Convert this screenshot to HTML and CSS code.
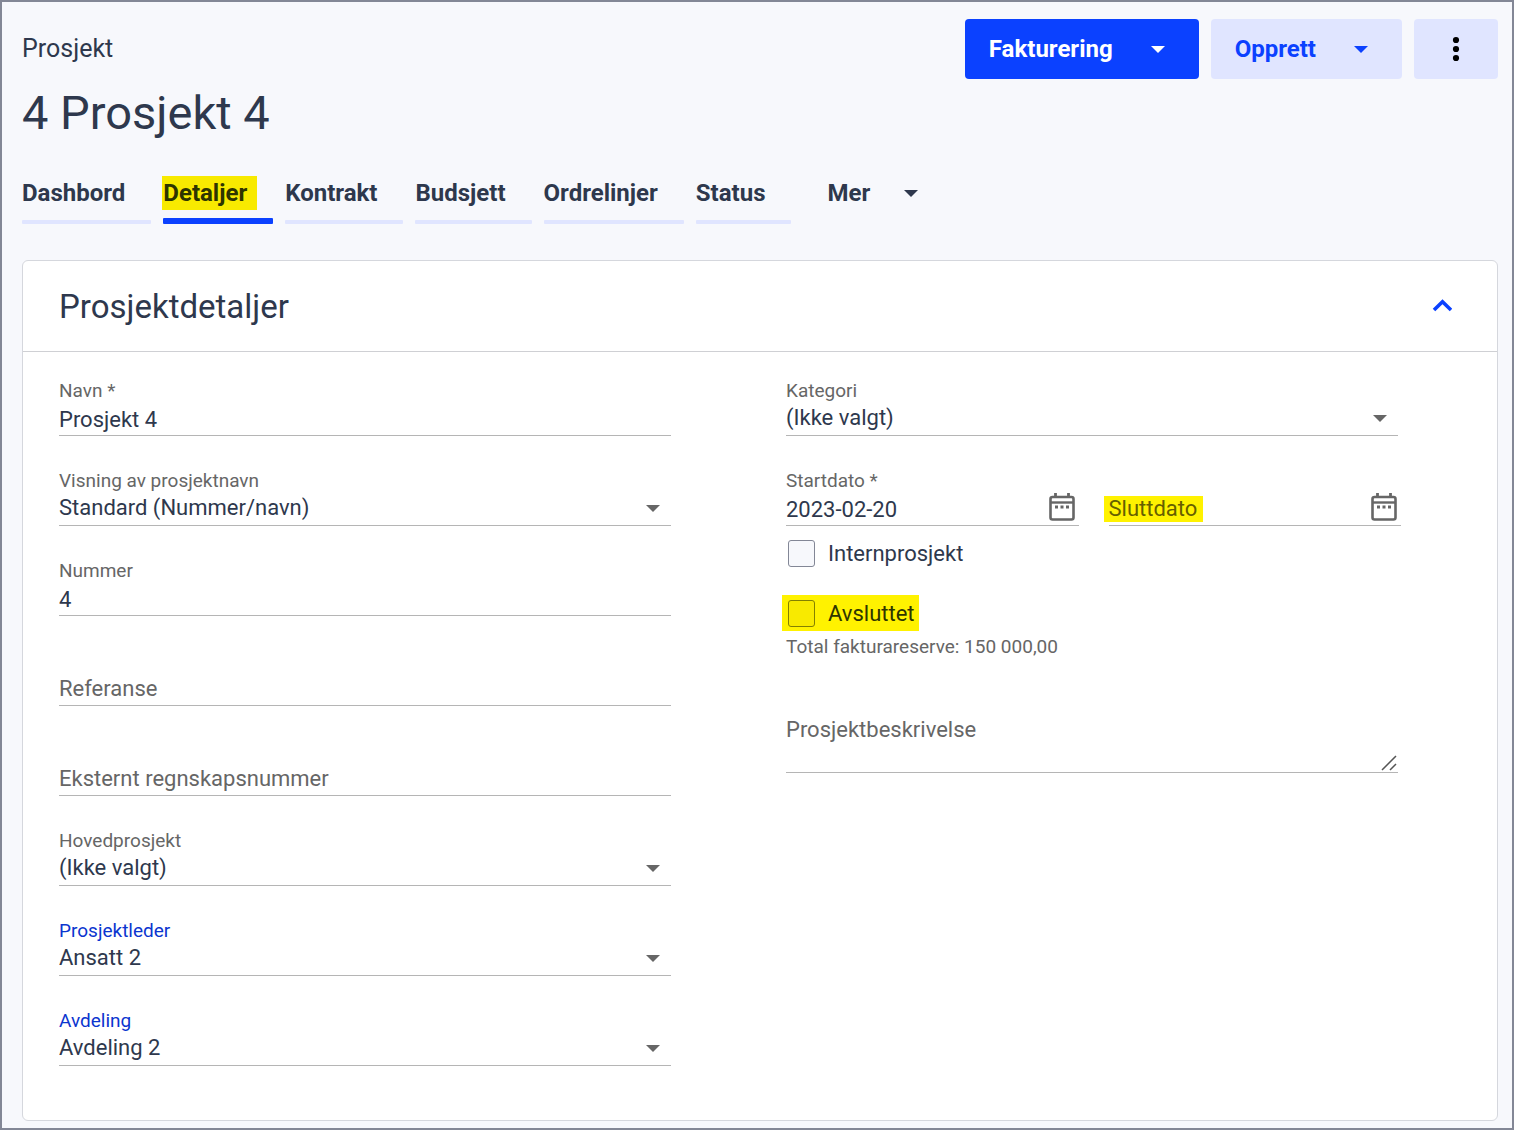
FILE: index.html
```html
<!DOCTYPE html>
<html lang="no">
<head>
    <meta charset="UTF-8">
    <meta name="viewport" content="width=device-width, initial-scale=1.0">
    <title>4 Prosjekt 4</title>
    <link rel="stylesheet" href="styles.css">
</head>
<body>
    <header class="page-header">
        <div>
            <p class="page-type">Prosjekt</p>
            <h1>4 Prosjekt 4</h1>
        </div>
        <div class="actions">
            <button type="button" class="btn btn-primary">Fakturering <span class="caret"></span></button>
            <button type="button" class="btn">Opprett <span class="caret"></span></button>
            <button type="button" class="btn btn-more" aria-label="Flere valg">
                <svg width="8" height="26" viewBox="0 0 8 26">
                    <circle cx="4" cy="4" r="3.1"/>
                    <circle cx="4" cy="13" r="3.1"/>
                    <circle cx="4" cy="22" r="3.1"/>
                </svg>
            </button>
        </div>
    </header>

    <nav class="tabs">
        <a href="#" class="tab">Dashbord</a>
        <a href="#" class="tab active"><mark>Detaljer</mark></a>
        <a href="#" class="tab">Kontrakt</a>
        <a href="#" class="tab">Budsjett</a>
        <a href="#" class="tab">Ordrelinjer</a>
        <a href="#" class="tab">Status</a>
        <button type="button" class="tab-more">Mer <span class="caret"></span></button>
    </nav>

    <main class="card">
        <div class="card-header">
            <h2>Prosjektdetaljer</h2>
            <button type="button" class="collapse" aria-label="Skjul">
                <svg width="20" height="14" viewBox="0 0 20 14">
                    <path d="M2 11L10.500 2.800L19 11" fill="none" stroke="#0b41ff" stroke-width="3.6"/>
                </svg>
            </button>
        </div>

        <form class="card-body">
            <div class="column">
                <div class="field">
                    <label for="navn">Navn *</label>
                    <div class="control"><input type="text" id="navn" value="Prosjekt 4" required></div>
                </div>
                <div class="field">
                    <label for="visning">Visning av prosjektnavn</label>
                    <div class="control select">
                        <select id="visning"><option>Standard (Nummer/navn)</option></select>
                    </div>
                </div>
                <div class="field">
                    <label for="nummer">Nummer</label>
                    <div class="control"><input type="text" id="nummer" value="4"></div>
                </div>
                <div class="field empty">
                    <div class="control"><label for="referanse">Referanse</label><input type="text" id="referanse"></div>
                </div>
                <div class="field empty">
                    <div class="control"><label for="regnskap">Eksternt regnskapsnummer</label><input type="text" id="regnskap"></div>
                </div>
                <div class="field">
                    <label for="hovedprosjekt">Hovedprosjekt</label>
                    <div class="control select">
                        <select id="hovedprosjekt"><option>(Ikke valgt)</option></select>
                    </div>
                </div>
                <div class="field linked">
                    <label for="leder">Prosjektleder</label>
                    <div class="control select">
                        <select id="leder"><option>Ansatt 2</option></select>
                    </div>
                </div>
                <div class="field linked">
                    <label for="avdeling">Avdeling</label>
                    <div class="control select">
                        <select id="avdeling"><option>Avdeling 2</option></select>
                    </div>
                </div>
            </div>

            <div class="column">
                <div class="field">
                    <label for="kategori">Kategori</label>
                    <div class="control select">
                        <select id="kategori"><option>(Ikke valgt)</option></select>
                    </div>
                </div>
                <div>
                    <div class="dates">
                        <div class="field">
                            <label for="start">Startdato *</label>
                            <div class="control">
                                <input type="text" id="start" value="2023-02-20" required>
                                <button type="button" class="calendar" aria-label="Velg startdato">
                                    <svg width="26" height="30" viewBox="0 0 26 30">
                                        <rect x="1.5" y="4" width="23" height="22.5" rx="2" fill="none" stroke="#666" stroke-width="2.6"/>
                                        <path d="M1.5 9.500h23" stroke="#666" stroke-width="2.4"/>
                                        <path d="M6.5 0v4M19.5 0v4" stroke="#666" stroke-width="2.8"/>
                                        <path d="M6 14h3M11.5 14h3M17 14h3" stroke="#666" stroke-width="2.8"/>
                                    </svg>
                                </button>
                            </div>
                        </div>
                        <div class="field empty">
                            <div class="control">
                                <label for="slutt"><mark>Sluttdato</mark></label>
                                <input type="text" id="slutt">
                                <button type="button" class="calendar" aria-label="Velg sluttdato">
                                    <svg width="26" height="30" viewBox="0 0 26 30">
                                        <rect x="1.5" y="4" width="23" height="22.5" rx="2" fill="none" stroke="#666" stroke-width="2.6"/>
                                        <path d="M1.5 9.500h23" stroke="#666" stroke-width="2.4"/>
                                        <path d="M6.5 0v4M19.5 0v4" stroke="#666" stroke-width="2.8"/>
                                        <path d="M6 14h3M11.5 14h3M17 14h3" stroke="#666" stroke-width="2.8"/>
                                    </svg>
                                </button>
                            </div>
                        </div>
                    </div>
                    <div class="checks">
                        <label class="check"><input type="checkbox" name="intern">Internprosjekt</label>
                        <label class="check marked"><input type="checkbox" name="avsluttet">Avsluttet</label>
                    </div>
                    <p class="reserve">Total fakturareserve: 150 000,00</p>
                    <div class="description">
                        <label for="beskrivelse">Prosjektbeskrivelse</label>
                        <textarea id="beskrivelse"></textarea>
                        <svg class="grip" width="16" height="16" viewBox="0 0 16 16">
                            <path d="M1 15L15 1M9 15L15 9" stroke="#555" stroke-width="1.5"/>
                        </svg>
                    </div>
                </div>
            </div>
        </form>
    </main>
</body>
</html>
```

FILE: styles.css
```css
* {
    box-sizing: border-box;
}
body {
    font-family: Roboto, "Open Sans", sans-serif;
    font-size: 22px;
    color: #2e384d;
    background-color: #f7f8fc;
    margin: 0;
    min-height: 100vh;
    padding: 17px 14px 7px 20px;
    border: 2px solid #838796;
}
h1, h2, p {
    margin: 0;
    font-weight: 400;
}
button, input, select, textarea {
    font: inherit;
    color: inherit;
    margin: 0;
    padding: 0;
    border: none;
    outline: none;
    background: none;
}
button {
    cursor: pointer;
}
mark {
    background-color: #fff200;
    color: #665f00;
}
.page-header {
    display: flex;
    justify-content: space-between;
    align-items: flex-start;
}
.page-type {
    font-size: 25px;
    line-height: 60px;
}
h1 {
    font-size: 47px;
    line-height: 68px;
}
.actions {
    display: flex;
    gap: 12px;
}
.btn {
    display: flex;
    align-items: center;
    gap: 38px;
    height: 60px;
    padding: 0 34px 0 24px;
    border-radius: 4px;
    background-color: #e0e5ff;
    color: #0b41ff;
    font-size: 24px;
    font-weight: 700;
}
.btn-primary {
    background-color: #0b41ff;
    color: #fff;
}
.btn-more {
    justify-content: center;
    width: 84px;
    padding: 0;
    color: #000;
}
.caret {
    border: 7px solid transparent;
    border-top-color: currentColor;
    border-bottom: none;
}
.tabs {
    display: flex;
    gap: 12px;
    margin-top: 22px;
    font-size: 24px;
    font-weight: 700;
}
.tab {
    display: flex;
    align-items: center;
    height: 55px;
    padding-right: 26px;
    padding-bottom: 7px;
    position: relative;
    color: inherit;
    text-decoration: none;
}
.tab::after {
    content: "";
    position: absolute;
    left: 0;
    right: 0;
    bottom: 0;
    height: 4px;
    border-radius: 1px;
    background-color: #e0e5ff;
}
.tab.active::after {
    height: 6px;
    background-color: #0b41ff;
}
.tab mark {
    margin: 0 -10px 0 -1px;
    padding: 0 10px 0 1px;
    line-height: 34px;
    background-color: #f8ea00;
    color: #2e3500;
}
.tab-more {
    display: flex;
    align-items: center;
    gap: 34px;
    margin-left: 24px;
    padding-bottom: 7px;
    font-weight: 700;
}
.card {
    margin-top: 36px;
    background-color: #fff;
    border: 1px solid #d5d7dd;
    border-radius: 6px;
}
.card-header {
    display: flex;
    justify-content: space-between;
    align-items: center;
    height: 91px;
    padding: 0 45px 0 36px;
    border-bottom: 1px solid #cfd0d4;
}
h2 {
    font-size: 33px;
}
.collapse {
    display: flex;
}
.card-body {
    display: grid;
    grid-template-columns: repeat(2, minmax(0, 1fr));
    gap: 115px;
    padding: 29px 99px 54px 36px;
}
.column {
    display: flex;
    flex-direction: column;
    gap: 35px;
}
.field {
    display: flex;
    flex-direction: column;
    height: 55px;
    color: #666;
    font-size: 19px;
    line-height: 20px;
}
.field.empty {
    justify-content: flex-end;
}
.field.linked {
    color: #0b35cf;
}
.control {
    display: flex;
    align-items: center;
    position: relative;
    height: 35px;
    border-bottom: 1px solid #b5b5b5;
    color: #2e384d;
    font-size: 22px;
    line-height: 26px;
}
.control label {
    padding-top: 2px;
    color: #666;
}
.control input,
.control select {
    flex: 1;
    min-width: 0;
    height: 34px;
}
.control input {
    padding-top: 2px;
}
.control select {
    appearance: none;
}
.select::after {
    content: "";
    position: absolute;
    right: 11px;
    top: 14px;
    border: 7px solid transparent;
    border-top-color: #666;
    border-bottom: none;
    pointer-events: none;
}
.control mark {
    display: block;
    margin-left: -5px;
    padding: 0 6px 0 5px;
}
.dates {
    display: grid;
    grid-template-columns: repeat(2, minmax(0, 1fr));
    gap: 30px;
    margin-right: -3px;
}
.calendar {
    display: flex;
    margin-right: 4px;
}
.checks {
    display: flex;
    flex-direction: column;
    align-items: flex-start;
    gap: 24px;
    margin: 9px 0 6px -4px;
}
.check {
    display: flex;
    align-items: center;
    gap: 13px;
    height: 36px;
    padding: 0 4px 0 6px;
}
.check input {
    appearance: none;
    width: 27px;
    height: 27px;
    border: 1px solid #838796;
    border-radius: 3px;
    background-color: #f7f8fc;
}
.check.marked {
    background-color: #fff200;
    color: #2e3500;
}
.check.marked input {
    background-color: #f8ea00;
    border-color: #838000;
}
.reserve {
    font-size: 19px;
    line-height: 20px;
    color: #666;
}
.description {
    display: flex;
    position: relative;
    height: 60px;
    margin-top: 56px;
    border-bottom: 1px solid #b5b5b5;
    color: #666;
    line-height: 34px;
}
.description textarea {
    flex: 1;
    min-width: 0;
    resize: none;
}
.grip {
    position: absolute;
    right: 1px;
    bottom: 1px;
    pointer-events: none;
}
```
